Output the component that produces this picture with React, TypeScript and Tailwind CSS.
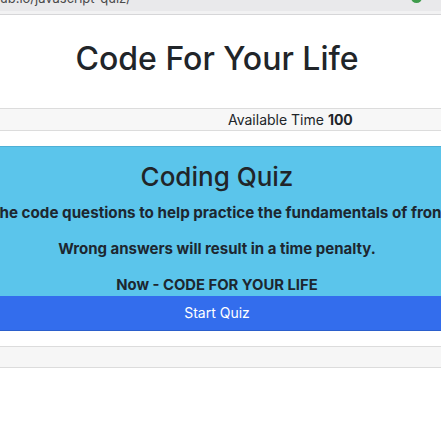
export default function App() {
  const sans = "font-['Inter','Liberation_Sans',Arial,sans-serif]";

  return (
    <div className={`${sans} min-h-[441px] bg-white text-[#212529]`}>
      {/* browser chrome remnant */}
      <div className="border-b border-[#d6d6d8]">
        <div className="flex h-[11px] items-start justify-between overflow-hidden bg-[#e9e9eb] pr-[19px]">
          <span className="-mt-[10px] whitespace-nowrap text-[13px] leading-[16px] text-[#4a4a4a]">
            ub.io/javascript-quiz/
          </span>
          <span className="-mt-[8px] h-[11px] w-[11px] rounded-full bg-[#3f9c4c]" />
        </div>
        <div className="h-[3px] bg-[#f2f2f3]" />
      </div>

      <header className="h-[93px] pt-[24px] pr-[7px] text-center">
        <h1 className="text-[32px] leading-[40px] font-medium">Code For Your Life</h1>
      </header>

      <div className="border-y border-[#dcdcdc] bg-[#f7f7f7]">
        <p className="pl-[228px] text-[14px] leading-[21px]">
          Available Time <span className="font-bold">100</span>
        </p>
      </div>

      <section className="mt-[15px] border-t border-[#4eb0d6] bg-[#5bc5eb] pt-[13px] pr-[7px] text-center text-[#1d2730]">
        <h2 className="mb-[8px] text-[26px] leading-[34px] font-medium text-[#212529]">Coding Quiz</h2>
        <div className="-mr-[7px] mb-[14px] flex justify-center overflow-hidden">
          <p className="whitespace-nowrap text-[15.2px] leading-[22px] font-bold">
            he code questions to help practice the fundamentals of fron
          </p>
        </div>
        <p className="mb-[14px] text-[15px] leading-[22px] font-bold">
          Wrong answers will result in a time penalty.
        </p>
        <p className="text-[14.8px] leading-[22px] font-bold">Now - CODE FOR YOUR LIFE</p>
      </section>

      <button
        type="button"
        className="block h-[35px] w-full border-b border-[#2b5fcc] bg-[#336ded] pr-[7px] text-center text-[14px] leading-[34px] text-white"
      >
        Start Quiz
      </button>

      <div className="mt-[15px] h-[22px] border-y border-[#dcdcdc] bg-[#f6f6f6]" />
    </div>
  );
}
